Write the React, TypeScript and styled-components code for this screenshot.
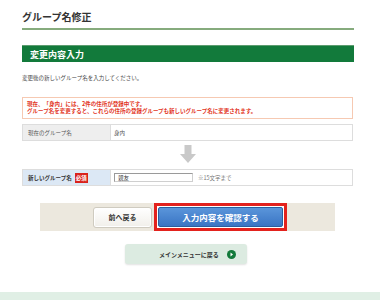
import styled, { createGlobalStyle } from "styled-components";

const GlobalStyle = createGlobalStyle`
  html, body {
    margin: 0;
    padding: 0;
    background: #ffffff;
  }
  body {
    font-family: "Noto Sans CJK JP", "Noto Sans", sans-serif;
    color: #333333;
  }
`;

const Page = styled.div`
  width: 380px;
  height: 300px;
  overflow: hidden;
  display: flex;
  flex-direction: column;
`;

const Content = styled.div`
  padding: 0 26px 0 22px;
`;

const Title = styled.h1`
  margin: 0;
  padding-top: 11px;
  padding-bottom: 5px;
  font-size: 10px;
  line-height: 12px;
  font-weight: 700;
  color: #333;
  border-bottom: 2px solid #86ab7d;
`;

const SectionBar = styled.h2`
  margin: 15px 0 0;
  height: 17px;
  box-sizing: border-box;
  padding-left: 8px;
  display: flex;
  align-items: center;
  background: #127a3b;
  border-top: 1px solid #5c9c6f;
  color: #fff;
  font-size: 9px;
  font-weight: 700;
`;

const Lead = styled.p`
  margin: 13px 0 0;
  font-size: 5.5px;
  line-height: 6px;
  color: #444;
`;

const Notice = styled.div`
  margin-top: 16px;
  margin-right: 1px;
  border: 1px solid #f6c9b2;
  padding: 3px 4px;
  font-size: 5.5px;
  line-height: 7px;
  font-weight: 700;
  color: #e2341d;
`;

const Row = styled.div<{ $gap: number }>`
  display: grid;
  grid-template-columns: 88px 1fr;
  height: 17px;
  box-sizing: border-box;
  border: 1px solid #dddddd;
  margin-right: 1px;
  margin-top: ${(p) => p.$gap}px;
`;

const Label = styled.div<{ $required?: boolean }>`
  display: flex;
  align-items: center;
  gap: 3px;
  padding-left: 5px;
  background: ${(p) => (p.$required ? "#dce8f5" : "#eeeeee")};
  border-right: 1px solid #dddddd;
  font-size: 5.5px;
  font-weight: ${(p) => (p.$required ? 700 : 400)};
  color: ${(p) => (p.$required ? "#333" : "#555")};
`;

const Badge = styled.span`
  background: #d9221c;
  color: #fff;
  font-size: 5.5px;
  font-weight: 700;
  padding: 2px 1px;
  line-height: 6px;
`;

const Value = styled.div`
  display: flex;
  align-items: center;
  gap: 5px;
  padding-left: 3px;
  font-size: 5.5px;
  color: #555;
`;

const TextBox = styled.div`
  width: 79px;
  height: 9px;
  box-sizing: border-box;
  border: 1px solid #9a9a9a;
  border-right-color: #cfcfcf;
  border-bottom-color: #cfcfcf;
  padding-left: 3px;
  display: flex;
  align-items: center;
  font-size: 5.5px;
  color: #333;
`;

const Note = styled.span`
  color: #777;
`;

const ArrowWrap = styled.div`
  display: flex;
  justify-content: center;
  padding-top: 4px;
  height: 24px;
  box-sizing: border-box;
`;

const ButtonTray = styled.div`
  margin: 17px 45px 0 40px;
  height: 28px;
  background: #ece8de;
  display: flex;
  justify-content: center;
  align-items: center;
  gap: 2px;
  padding-left: 5px;
`;

const BackButton = styled.button`
  width: 59px;
  height: 21px;
  border: 1px solid #cfcbc0;
  border-radius: 3px;
  background: linear-gradient(#ffffff, #f1efea);
  box-shadow: inset 0 0 0 1px #fff;
  font-family: inherit;
  font-size: 7px;
  font-weight: 700;
  color: #333;
  padding: 0;
`;

const ConfirmFrame = styled.div`
  border: 3px solid #e3221d;
  padding: 1px;
  background: #fff;
`;

const ConfirmButton = styled.button`
  width: 125px;
  height: 20px;
  border: 1px solid #2c5f9e;
  border-radius: 2px;
  background: linear-gradient(#5a95da, #3a75c4);
  font-family: inherit;
  font-size: 8.5px;
  font-weight: 700;
  color: #fff;
  padding: 0;
  display: block;
`;

const MenuRow = styled.div`
  display: flex;
  justify-content: center;
  margin-top: 13px;
  padding-right: 8px;
`;

const MenuButton = styled.button`
  width: 122px;
  height: 20px;
  border: none;
  border-radius: 3px;
  background: #dcebe1;
  box-shadow: 0 1px 2px rgba(0, 0, 0, 0.12);
  display: flex;
  align-items: center;
  padding: 0 11px 0 34px;
  font-family: inherit;
  font-size: 6px;
  font-weight: 700;
  color: #333;
  justify-content: space-between;
`;

const Spacer = styled.div`
  flex: 1;
`;

const Footer = styled.div`
  height: 8px;
  background: #e0efe5;
`;

const DownArrow = () => (
  <svg width="16" height="18" viewBox="0 0 16 18">
    <path d="M4.5 0 H11.5 V9 H16 L8 18 L0 9 H4.5 Z" fill="#c9c9c9" />
  </svg>
);

const GoIcon = () => (
  <svg width="9" height="9" viewBox="0 0 9 9">
    <circle cx="4.5" cy="4.5" r="4.5" fill="#137a3b" />
    <path d="M3.5 2.6 L6 4.5 L3.5 6.4 Z" fill="#fff" />
  </svg>
);

export default function App() {
  return (
    <Page>
      <GlobalStyle />
      <Content>
        <Title>グループ名修正</Title>
        <SectionBar>変更内容入力</SectionBar>
        <Lead>変更後の新しいグループ名を入力してください。</Lead>
        <Notice>
          現在、「身内」には、2件の住所が登録中です。
          <br />
          グループ名を変更すると、これらの住所の登録グループも新しいグループ名に変更されます。
        </Notice>
        <Row $gap={5}>
          <Label>現在のグループ名</Label>
          <Value>身内</Value>
        </Row>
        <ArrowWrap>
          <DownArrow />
        </ArrowWrap>
        <Row $gap={4}>
          <Label $required>
            新しいグループ名<Badge>必須</Badge>
          </Label>
          <Value>
            <TextBox>親友</TextBox>
            <Note>※15文字まで</Note>
          </Value>
        </Row>
      </Content>
      <ButtonTray>
        <BackButton>前へ戻る</BackButton>
        <ConfirmFrame>
          <ConfirmButton>入力内容を確認する</ConfirmButton>
        </ConfirmFrame>
      </ButtonTray>
      <MenuRow>
        <MenuButton>
          メインメニューに戻る
          <GoIcon />
        </MenuButton>
      </MenuRow>
      <Spacer />
      <Footer />
    </Page>
  );
}
